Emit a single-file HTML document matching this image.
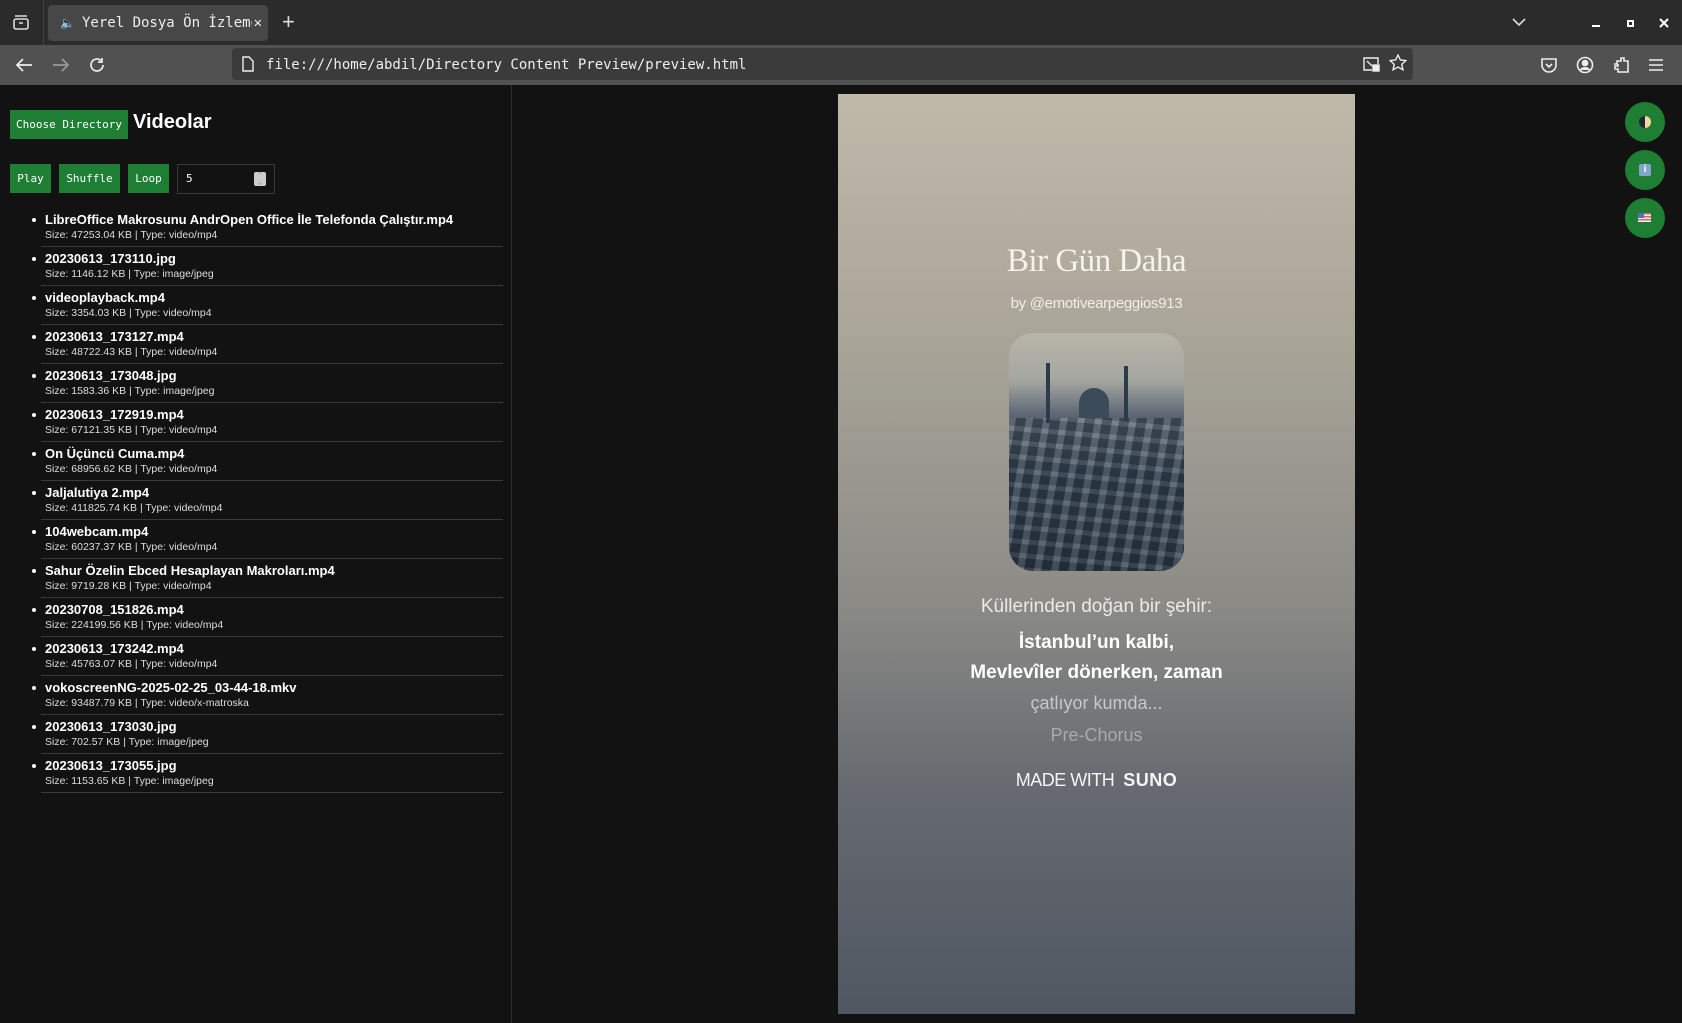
<!DOCTYPE html>
<html><head><meta charset="utf-8">
<style>
*{margin:0;padding:0;box-sizing:border-box}
html,body{width:1682px;height:1023px;overflow:hidden;background:#121212;font-family:"Liberation Sans",sans-serif;color:#fff}
.tabbar{position:absolute;left:0;top:0;width:1682px;height:45px;background:#2b2b2b}
.tab{position:absolute;left:48px;top:5px;width:220px;height:36px;background:#474747;border-radius:4px;font-family:"DejaVu Sans Mono","Liberation Mono",monospace;font-size:14px;color:#eee;line-height:36px;padding-left:34px;white-space:nowrap;overflow:hidden}
.toolbar{position:absolute;left:0;top:45px;width:1682px;height:40px;background:#515151}
.url{position:absolute;left:232px;top:3px;width:1181px;height:32px;background:#3b3b3b;border-radius:4px;font-family:"DejaVu Sans Mono","Liberation Mono",monospace;font-size:14px;color:#eee;line-height:34px;padding-left:34px}
svg{position:absolute}
.left{position:absolute;left:0;top:85px;width:512px;height:938px;border-right:1px solid #2e2e2e}
.btn{position:absolute;background:#1e7e34;color:#fff;font-family:"DejaVu Sans Mono","Liberation Mono",monospace;font-size:11px;text-align:center}
h1{position:absolute;left:133px;top:26px;font-size:20px;font-weight:bold}
.num{position:absolute;left:177px;top:79px;width:98px;height:30px;border:1px solid #3a3a3a;font-family:"DejaVu Sans Mono",monospace;font-size:11px;line-height:28px;padding-left:8px}
ul{position:absolute;left:41px;top:123px;width:462px;list-style:none}
li{height:39px;border-bottom:1px solid #3a3a3a;padding:4px 0 0 4px;position:relative}
li:before{content:"";position:absolute;left:-9px;top:10px;width:4px;height:4px;border-radius:50%;background:#fff}
li b{display:block;font-size:13px;line-height:16px}
li span{display:block;font-size:10.5px;line-height:14px;color:#ddd}
.video{position:absolute;left:838px;top:94px;width:517px;height:920px;background:linear-gradient(#bfb9aa 0%,#aaa699 25%,#8c8b87 55%,#676b70 75%,#505762 100%);text-align:center}
.c{position:absolute;left:0;width:517px;text-align:center}
.circ{position:absolute;left:1625px;width:40px;height:40px;border-radius:50%;background:#1e7e34}
</style></head><body>
<div class="tabbar">
 <svg style="left:12px;top:14px" width="18" height="17" viewBox="0 0 18 17" fill="none" stroke="#ddd" stroke-width="1.6"><rect x="2" y="5" width="14" height="10" rx="2"/><path d="M3 2h12M7 9h4"/></svg>
 <div style="position:absolute;left:43px;top:0;width:1px;height:45px;background:#444"></div>
 <div class="tab"><span style="position:absolute;left:12px;font-size:12px">🔈</span>Yerel Dosya Ön İzleme<span style="position:absolute;right:6px;top:0;background:#474747;padding-left:2px">✕</span></div>
 <div style="position:absolute;left:282px;top:9px;font-size:22px;color:#ddd">+</div>
 <svg style="left:1511px;top:17px" width="16" height="10" viewBox="0 0 16 10" fill="none" stroke="#ddd" stroke-width="1.6"><path d="M2 2l6 6 6-6"/></svg>
 <div style="position:absolute;left:1592px;top:25px;width:8px;height:2px;background:#fff"></div>
 <div style="position:absolute;left:1627px;top:20px;width:7px;height:7px;border:2px solid #fff"></div>
 <svg style="left:1659px;top:18px" width="10" height="10" viewBox="0 0 10 10" stroke="#fff" stroke-width="2"><path d="M1 1l8 8M9 1l-8 8"/></svg>
</div>
<div class="toolbar">
 <svg style="left:15px;top:12px" width="18" height="16" viewBox="0 0 18 16" fill="none" stroke="#eee" stroke-width="1.7"><path d="M17 8H2M8 2L2 8l6 6"/></svg>
 <svg style="left:52px;top:12px" width="18" height="16" viewBox="0 0 18 16" fill="none" stroke="#999" stroke-width="1.7"><path d="M1 8h15M10 2l6 6-6 6"/></svg>
 <svg style="left:88px;top:11px" width="18" height="18" viewBox="0 0 18 18" fill="none" stroke="#eee" stroke-width="1.7"><path d="M15 9a6 6 0 1 1-2-4.5M14 2v4h-4"/></svg>
 <div class="url"><svg style="left:10px;top:8px" width="12" height="16" viewBox="0 0 12 16" fill="none" stroke="#eee" stroke-width="1.4"><path d="M1 1h6l4 4v10H1z"/></svg>file:///home/abdil/Directory Content Preview/preview.html
  <svg style="left:1130px;top:8px" width="18" height="16" viewBox="0 0 18 16" fill="none" stroke="#eee" stroke-width="1.4"><path d="M10 14H2V2h14v6M5 5l5 5"/><rect x="11" y="9" width="6" height="6" fill="#eee"/></svg>
  <svg style="left:1157px;top:6px" width="18" height="18" viewBox="0 0 18 18" fill="none" stroke="#eee" stroke-width="1.4"><path d="M9 1l2.4 5 5.4.6-4 3.8 1.1 5.4L9 13l-4.9 2.8 1.1-5.4-4-3.8 5.4-.6z"/></svg>
 </div>
 <svg style="left:1540px;top:12px" width="18" height="16" viewBox="0 0 18 16" fill="none" stroke="#eee" stroke-width="1.6"><path d="M2 2h14v6a7 7 0 0 1-14 0z M6 7l3 3 3-3"/></svg>
 <svg style="left:1576px;top:11px" width="18" height="18" viewBox="0 0 18 18" fill="none" stroke="#eee" stroke-width="1.6"><circle cx="9" cy="9" r="7.5"/><circle cx="9" cy="7" r="2.5" fill="#eee"/><path d="M4.5 14c2-3 7-3 9 0" fill="#eee"/></svg>
 <svg style="left:1612px;top:11px" width="18" height="18" viewBox="0 0 18 18" fill="none" stroke="#eee" stroke-width="1.6"><path d="M2 8h3V5h4V2h3v3h4v11H6v-3H3v-3h3V8"/></svg>
 <svg style="left:1648px;top:13px" width="16" height="14" viewBox="0 0 16 14" stroke="#eee" stroke-width="1.6"><path d="M1 2h14M1 7h14M1 12h14"/></svg>
</div>
<div class="left">
 <div class="btn" style="left:10px;top:25px;width:118px;height:29px;line-height:29px">Choose Directory</div>
 <h1>Videolar</h1>
 <div class="btn" style="left:10px;top:79px;width:41px;height:29px;line-height:29px">Play</div>
 <div class="btn" style="left:59px;top:79px;width:61px;height:29px;line-height:29px">Shuffle</div>
 <div class="btn" style="left:128px;top:79px;width:41px;height:29px;line-height:29px">Loop</div>
 <div class="num">5<div style="position:absolute;right:8px;top:7px;width:12px;height:14px;background:#ccc;border-radius:2px;font-size:7px;line-height:7px;color:#888;text-align:center">⌃<br>⌄</div></div>
 <ul>
  <li><b>LibreOffice Makrosunu AndrOpen Office İle Telefonda Çalıştır.mp4</b><span>Size: 47253.04 KB | Type: video/mp4</span></li>
  <li><b>20230613_173110.jpg</b><span>Size: 1146.12 KB | Type: image/jpeg</span></li>
  <li><b>videoplayback.mp4</b><span>Size: 3354.03 KB | Type: video/mp4</span></li>
  <li><b>20230613_173127.mp4</b><span>Size: 48722.43 KB | Type: video/mp4</span></li>
  <li><b>20230613_173048.jpg</b><span>Size: 1583.36 KB | Type: image/jpeg</span></li>
  <li><b>20230613_172919.mp4</b><span>Size: 67121.35 KB | Type: video/mp4</span></li>
  <li><b>On Üçüncü Cuma.mp4</b><span>Size: 68956.62 KB | Type: video/mp4</span></li>
  <li><b>Jaljalutiya 2.mp4</b><span>Size: 411825.74 KB | Type: video/mp4</span></li>
  <li><b>104webcam.mp4</b><span>Size: 60237.37 KB | Type: video/mp4</span></li>
  <li><b>Sahur Özelin Ebced Hesaplayan Makroları.mp4</b><span>Size: 9719.28 KB | Type: video/mp4</span></li>
  <li><b>20230708_151826.mp4</b><span>Size: 224199.56 KB | Type: video/mp4</span></li>
  <li><b>20230613_173242.mp4</b><span>Size: 45763.07 KB | Type: video/mp4</span></li>
  <li><b>vokoscreenNG-2025-02-25_03-44-18.mkv</b><span>Size: 93487.79 KB | Type: video/x-matroska</span></li>
  <li><b>20230613_173030.jpg</b><span>Size: 702.57 KB | Type: image/jpeg</span></li>
  <li><b>20230613_173055.jpg</b><span>Size: 1153.65 KB | Type: image/jpeg</span></li>
 </ul>
</div>
<div class="video">
 <div class="c" style="top:149px;font-family:'Liberation Serif',serif;font-size:33px;color:#f6f3ea;letter-spacing:-0.5px">Bir Gün Daha</div>
 <div class="c" style="top:201px;font-size:15px;color:#f0eee8;letter-spacing:-0.3px">by @emotivearpeggios913</div>
 <div style="position:absolute;left:171px;top:239px;width:175px;height:238px;border-radius:24px;overflow:hidden;background:linear-gradient(#b9b6a9 0%,#a4a6a1 20%,#5a6472 35%,#3a4655 60%,#2d3845 100%)">
  <div style="position:absolute;left:0;top:85px;width:175px;height:153px;background:repeating-linear-gradient(100deg,rgba(190,200,210,.18) 0 7px,rgba(20,30,40,.28) 7px 17px),repeating-linear-gradient(5deg,rgba(200,210,220,.15) 0 5px,rgba(20,30,40,.25) 5px 14px)"></div>
  <div style="position:absolute;left:70px;top:55px;width:30px;height:30px;border-radius:50% 50% 0 0;background:#3b4b5a"></div>
  <div style="position:absolute;left:37px;top:30px;width:4px;height:60px;background:#2e3a47"></div>
  <div style="position:absolute;left:115px;top:33px;width:4px;height:55px;background:#2e3a47"></div>
 </div>
 <div class="c" style="top:502px;font-size:19px;color:#eaeaea">Küllerinden doğan bir şehir:</div>
 <div class="c" style="top:538px;font-size:19px;font-weight:bold;color:#fff">İstanbul’un kalbi,</div>
 <div class="c" style="top:568px;font-size:19px;font-weight:bold;color:#fff">Mevlevîler dönerken, zaman</div>
 <div class="c" style="top:599px;font-size:18px;color:#c8c8c8">çatlıyor kumda...</div>
 <div class="c" style="top:631px;font-size:18px;color:#a8abae">Pre-Chorus</div>
 <div class="c" style="top:676px;font-size:18px;color:#f4f4f4;letter-spacing:-0.5px">MADE WITH &nbsp;<b style="letter-spacing:0.5px">SUNO</b></div>
</div>
<div class="circ" style="top:102px"><div style="position:absolute;left:14px;top:14px;width:12px;height:12px;border-radius:50%;background:linear-gradient(90deg,#1c2a38 50%,#f4d79a 50%)"></div></div>
<div class="circ" style="top:150px"><div style="position:absolute;left:14px;top:14px;width:12px;height:12px;background:#7fa8c8;color:#fff;font-size:10px;font-weight:bold;text-align:center;line-height:12px;border-radius:2px">i</div></div>
<div class="circ" style="top:198px"><div style="position:absolute;left:13px;top:15px;width:13px;height:9px;background:repeating-linear-gradient(#d66 0 1.5px,#eee 1.5px 3px)"><div style="width:6px;height:5px;background:#5a6fb0"></div></div></div>
</body></html>
